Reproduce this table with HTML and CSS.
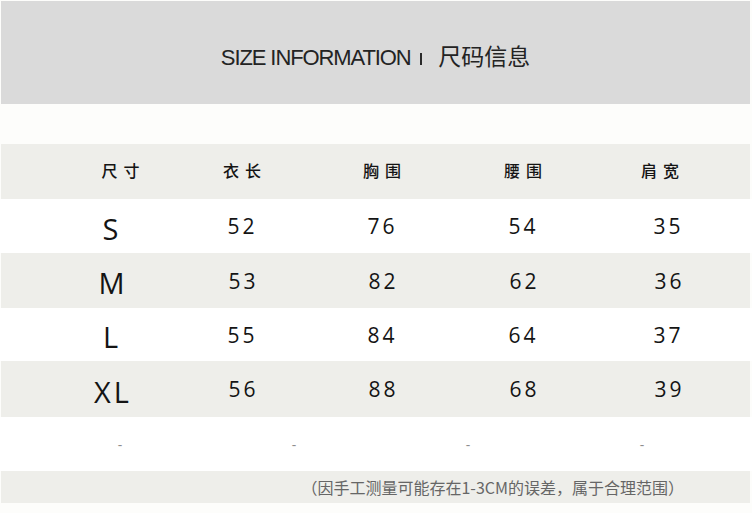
FILE: index.html
```html
<!DOCTYPE html>
<html lang="zh">
<head>
<meta charset="utf-8">
<title>Size Information</title>
<link rel="stylesheet" href="styles.css">
</head>
<body>
<div class="page">
  <header class="banner">
    <h1 class="title"><span class="en">SIZE INFORMATION</span><span class="sep"></span><span class="cn">尺码信息</span></h1>
  </header>

  <div class="table">
    <div class="row head">
      <div class="cell c1"><span>尺寸</span></div>
      <div class="cell"><span>衣长</span></div>
      <div class="cell"><span>胸围</span></div>
      <div class="cell"><span>腰围</span></div>
      <div class="cell c5"><span>肩宽</span></div>
    </div>
    <div class="row r-s">
      <div class="cell size"><span>S</span></div>
      <div class="cell num"><span>52</span></div>
      <div class="cell num"><span>76</span></div>
      <div class="cell num"><span>54</span></div>
      <div class="cell num last"><span>35</span></div>
    </div>
    <div class="row shade r-m">
      <div class="cell size"><span>M</span></div>
      <div class="cell num"><span>53</span></div>
      <div class="cell num"><span>82</span></div>
      <div class="cell num"><span>62</span></div>
      <div class="cell num last"><span>36</span></div>
    </div>
    <div class="row r-l">
      <div class="cell size"><span>L</span></div>
      <div class="cell num"><span>55</span></div>
      <div class="cell num"><span>84</span></div>
      <div class="cell num"><span>64</span></div>
      <div class="cell num last"><span>37</span></div>
    </div>
    <div class="row shade r-xl">
      <div class="cell size"><span>XL</span></div>
      <div class="cell num"><span>56</span></div>
      <div class="cell num"><span>88</span></div>
      <div class="cell num"><span>68</span></div>
      <div class="cell num last"><span>39</span></div>
    </div>
    <div class="dashes">
      <span>-</span><span>-</span><span>-</span><span>-</span>
    </div>
    <div class="note">
      <p>（因手工测量可能存在1-3CM的误差，属于合理范围）</p>
    </div>
  </div>
</div>
</body>
</html>
```

FILE: styles.css
```css
html, body {
  margin: 0;
  padding: 0;
  background: #ffffff;
}

.page {
  width: 752px;
  height: 513px;
  overflow: hidden;
  background: #fdfdfb;
}

.banner {
  margin: 1px 2px 0 1px;
  height: 103px;
  background: #dadada;
  display: flex;
  align-items: center;
  justify-content: center;
}

.title {
  margin: 0;
  padding-top: 5px;
  display: flex;
  align-items: baseline;
  font-weight: normal;
  color: #232323;
}

.title .en {
  font-family: "Liberation Sans", Arial, sans-serif;
  font-size: 22px;
  letter-spacing: -1.1px;
}

.title .sep {
  display: inline-block;
  width: 2.5px;
  height: 12px;
  background: #2a2a2a;
  margin: 0 16px 0 9px;
}

.title .cn {
  font-family: "Noto Sans CJK SC", sans-serif;
  font-size: 23px;
}

.table {
  margin-top: 40px;
}

.row {
  display: grid;
  grid-template-columns: 111px 140px 140px 142px 138px;
  padding-left: 60px;
  align-items: center;
  justify-items: center;
  color: #141414;
}

.row.head {
  height: 55px;
  margin: 0 2px 0 1px;
  background: #eeeeea;
  font-family: "Noto Sans CJK SC", sans-serif;
  font-size: 16px;
  font-weight: 500;
  letter-spacing: 6px;
  padding-bottom: 4px;
  box-sizing: border-box;
}

.row.head .cell span {
  margin-right: -6px;
}

.row.head .c1 {
  padding-left: 8px;
}

.row.head .c5 {
  padding-right: 6px;
}

.r-s, .r-l {
  background: #ffffff;
}

.r-s { height: 54px; }
.r-m { height: 55px; }
.r-l { height: 53px; }
.r-xl { height: 56px; }

.row.shade {
  background: #eeeeea;
  margin: 0 2px 0 1px;
}

.cell span {
  display: inline-block;
}

.size {
  font-family: "Open Sans", sans-serif;
  font-size: 29px;
  font-weight: 500;
  letter-spacing: 3px;
  padding-right: 10px;
  padding-top: 4px;
}

.size span {
  margin-right: -3px;
}

.num {
  font-family: "Open Sans", sans-serif;
  font-size: 21px;
  letter-spacing: 3px;
}

.num span {
  margin-right: -3px;
}

.num.last {
  padding-left: 10px;
}

.dashes {
  height: 54px;
  background: #ffffff;
  display: grid;
  grid-template-columns: repeat(4, 174px);
  padding-left: 33px;
  align-items: center;
  justify-items: center;
  font-family: "Open Sans", sans-serif;
  font-size: 14px;
  color: #8e8e8e;
}

.note {
  height: 32px;
  margin: 0 2px 0 1px;
  background: #eeeeea;
  display: flex;
  align-items: center;
  justify-content: flex-end;
  padding-right: 66px;
}

.note p {
  margin: 0;
  font-family: "Noto Sans CJK SC", sans-serif;
  font-size: 16px;
  color: #666666;
}
```
